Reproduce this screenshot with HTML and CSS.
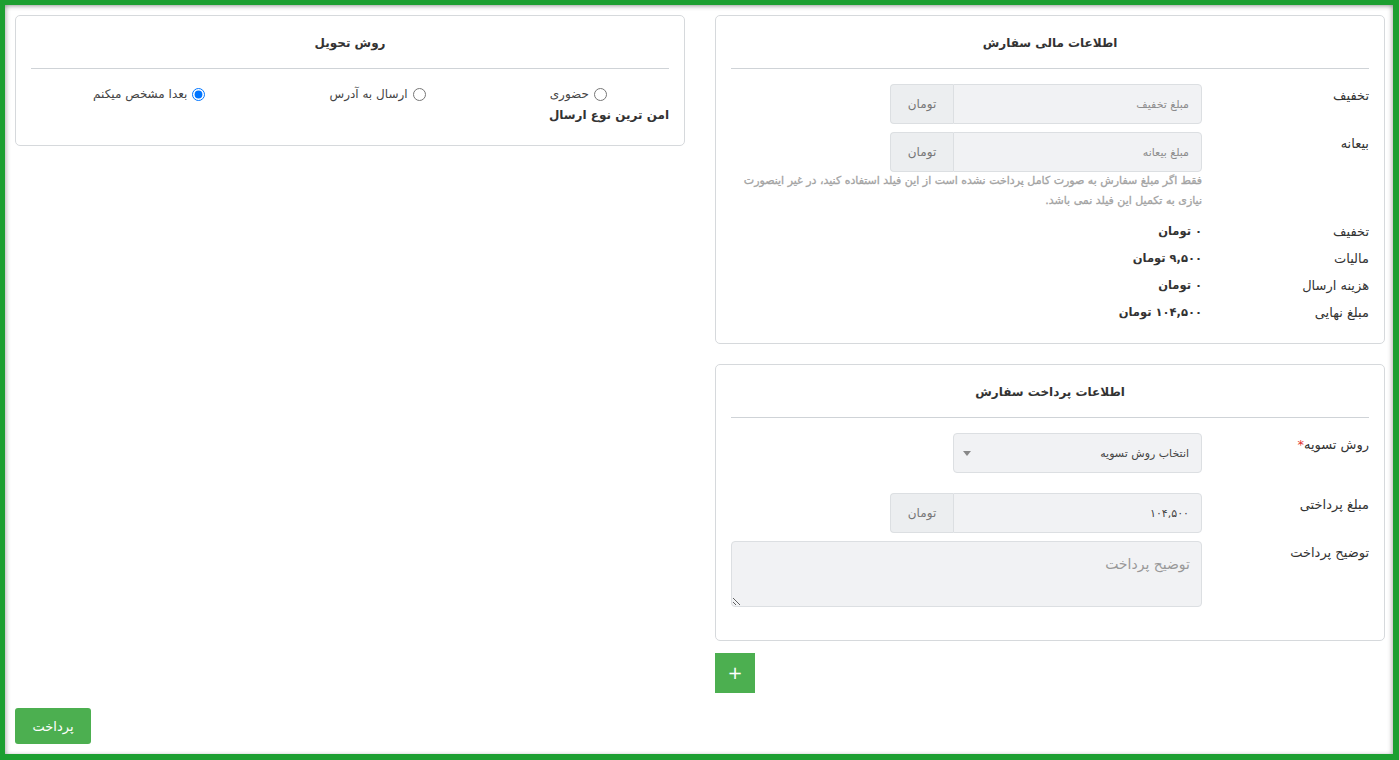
FILE: index.html
```html
<!DOCTYPE html>
<html lang="fa" dir="rtl">
<head>
<meta charset="utf-8">
<title>سفارش</title>
<link rel="stylesheet" href="styles.css">
</head>
<body>
<div class="frame">
  <div class="cols">
    <div class="col">
      <section class="card fin">
        <h2 class="card-title">اطلاعات مالی سفارش</h2>
        <hr class="sep">
        <div class="form">
          <div class="form-row">
            <label class="lbl">تخفیف</label>
            <div class="field">
              <div class="input-group">
                <input class="inp" type="text" placeholder="مبلغ تخفیف">
                <span class="addon">تومان</span>
              </div>
            </div>
          </div>
          <div class="form-row row-help">
            <label class="lbl">بیعانه</label>
            <div class="field">
              <div class="input-group">
                <input class="inp" type="text" placeholder="مبلغ بیعانه">
                <span class="addon">تومان</span>
              </div>
              <p class="help">فقط اگر مبلغ سفارش به صورت کامل پرداخت نشده است از این فیلد استفاده کنید، در غیر اینصورت نیازی به تکمیل این فیلد نمی باشد.</p>
            </div>
          </div>
          <div class="sums">
            <div class="sum-row"><span class="sum-lbl">تخفیف</span><span class="sum-val">۰ تومان</span></div>
            <div class="sum-row"><span class="sum-lbl">مالیات</span><span class="sum-val">۹,۵۰۰ تومان</span></div>
            <div class="sum-row"><span class="sum-lbl">هزینه ارسال</span><span class="sum-val">۰ تومان</span></div>
            <div class="sum-row"><span class="sum-lbl">مبلغ نهایی</span><span class="sum-val">۱۰۴,۵۰۰ تومان</span></div>
          </div>
        </div>
      </section>

      <section class="card pay">
        <h2 class="card-title">اطلاعات پرداخت سفارش</h2>
        <hr class="sep">
        <div class="form">
          <div class="form-row row-select">
            <label class="lbl">روش تسویه<span class="req">*</span></label>
            <div class="field">
              <div class="select"><span class="select-text">انتخاب روش تسویه</span><span class="caret"></span></div>
            </div>
          </div>
          <div class="form-row">
            <label class="lbl">مبلغ پرداختی</label>
            <div class="field">
              <div class="input-group">
                <input class="inp inp-val" type="text" value="۱۰۴,۵۰۰">
                <span class="addon">تومان</span>
              </div>
            </div>
          </div>
          <div class="form-row row-last">
            <label class="lbl">توضیح پرداخت</label>
            <div class="field">
              <textarea class="txt" placeholder="توضیح پرداخت"></textarea>
            </div>
          </div>
        </div>
      </section>

      <div class="add-wrap"><button class="btn-add" type="button">+</button></div>
    </div>

    <div class="col">
      <section class="card delivery">
        <h2 class="card-title">روش تحویل</h2>
        <hr class="sep">
        <div class="radios">
          <label class="radio"><input type="radio" name="d">حضوری</label>
          <label class="radio"><input type="radio" name="d">ارسال به آدرس</label>
          <label class="radio"><input type="radio" name="d" checked>بعدا مشخص میکنم</label>
        </div>
        <p class="safe">امن ترین نوع ارسال</p>
      </section>
    </div>
  </div>
  <div class="pay-row"><button class="btn-pay" type="button">پرداخت</button></div>
</div>
</body>
</html>
```

FILE: styles.css
```css
html, body {
  margin: 0;
  padding: 0;
  background: #fff;
}

.frame {
  width: 1399px;
  height: 760px;
  box-sizing: border-box;
  border-style: solid;
  border-color: #1d9f31;
  border-width: 5px 6px 6px 5px;
  padding: 10px 8px 0 10px;
  box-shadow: inset 0 3px 4px -1px rgba(0, 0, 0, .22), inset 3px 0 4px -1px rgba(0, 0, 0, .18), inset -3px 0 4px -1px rgba(0, 0, 0, .18);
  font-family: "DejaVu Sans", "Noto Sans", sans-serif;
  font-size: 13px;
  color: #333;
  overflow: hidden;
}

.cols {
  display: flex;
  gap: 30px;
}

.col {
  width: 670px;
  display: flex;
  flex-direction: column;
}

.card {
  border: 1px solid #d6d9dc;
  border-radius: 5px;
  padding: 15px;
  background: #fff;
}

.card-title {
  margin: 0;
  text-align: center;
  font-size: 12px;
  font-weight: bold;
  line-height: 24px;
  color: #333;
}

.sep {
  border: 0;
  border-top: 1px solid #cfd3d7;
  margin: 13px 0 0;
  height: 0;
}

.form {
  margin-top: 15px;
}

.form-row {
  display: grid;
  grid-template-columns: 137px 471px;
  column-gap: 30px;
  margin-bottom: 8px;
}

.row-help {
  margin-bottom: 7px;
}

.lbl {
  padding-top: 2px;
  line-height: 20px;
  font-size: 13px;
  color: #333;
}

.req {
  color: #e3342f;
}

.input-group {
  display: flex;
  width: 312px;
  height: 40px;
}

.inp {
  width: 249px;
  height: 40px;
  box-sizing: border-box;
  margin: 0;
  border: 1px solid #dcdfe2;
  border-radius: 0 4px 4px 0;
  background: #f1f2f4;
  padding: 0 12px;
  font-family: inherit;
  font-size: 11px;
  color: #444;
  direction: rtl;
  outline: none;
}

.inp::placeholder {
  color: #8c8c8c;
}

.addon {
  width: 63px;
  height: 40px;
  box-sizing: border-box;
  border: 1px solid #dcdfe2;
  border-right: 0;
  border-radius: 4px 0 0 4px;
  background: #eceef0;
  display: flex;
  align-items: center;
  justify-content: center;
  font-size: 12px;
  color: #777;
}

.help {
  margin: -1px 0 0;
  height: 40px;
  font-size: 11px;
  font-weight: normal;
  -webkit-text-stroke: 0.3px #a3a3a3;
  line-height: 20px;
  color: #a3a3a3;
}

.sums {
  margin-top: 0;
}

.sum-row {
  display: grid;
  grid-template-columns: 137px 471px;
  column-gap: 30px;
  height: 27px;
  line-height: 27px;
}

.sum-lbl {
  font-size: 13px;
  color: #333;
}

.sum-val {
  font-size: 11.5px;
  font-weight: bold;
  color: #333;
}

.fin {
  padding-bottom: 17px;
}

.pay {
  margin-top: 20px;
}

.row-select {
  margin-bottom: 20px;
}

.row-last {
  margin-bottom: 18px;
}

.select {
  width: 249px;
  height: 40px;
  box-sizing: border-box;
  border: 1px solid #dcdfe2;
  border-radius: 4px;
  background: #f1f2f4;
  display: flex;
  align-items: center;
  justify-content: space-between;
  padding: 0 12px 0 9px;
}

.select-text {
  font-size: 11px;
  color: #444;
}

.caret {
  width: 0;
  height: 0;
  border-left: 4px solid transparent;
  border-right: 4px solid transparent;
  border-top: 5px solid #888;
}

.txt {
  display: block;
  width: 471px;
  height: 66px;
  box-sizing: border-box;
  margin: 0;
  border: 1px solid #dcdfe2;
  border-radius: 4px;
  background: #f1f2f4;
  padding: 11px 11px;
  font-family: inherit;
  font-size: 14px;
  line-height: 22px;
  color: #444;
  outline: none;
}

.txt::placeholder {
  color: #999;
}

.add-wrap {
  margin-top: 12px;
  text-align: left;
}

.btn-add {
  width: 40px;
  height: 40px;
  border: 0;
  border-radius: 0;
  background: #4caf50;
  color: #fff;
  font-family: inherit;
  font-size: 18px;
  line-height: 40px;
  padding: 0;
}

.delivery {
  padding-bottom: 20px;
}

.radios {
  margin-top: 15px;
  display: flex;
  justify-content: space-around;
  align-items: center;
  line-height: 20px;
  font-size: 12px;
  color: #444;
}

.radio {
  display: flex;
  align-items: center;
  gap: 5px;
}

.radio input {
  margin: 0;
  width: 13px;
  height: 13px;
}

.safe {
  margin: 1px 0 0;
  font-weight: bold;
  font-size: 12px;
  line-height: 20px;
  color: #333;
}

.pay-row {
  margin-top: 15px;
  text-align: left;
}

.btn-pay {
  width: 76px;
  height: 36px;
  border: 0;
  border-radius: 3px;
  background: #4caf50;
  color: #fff;
  font-family: inherit;
  font-size: 13px;
  padding: 0;
}
```
